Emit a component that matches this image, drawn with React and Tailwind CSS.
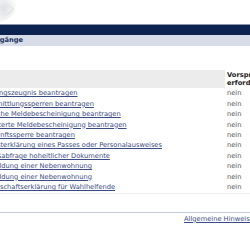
export default function App() {
  const rows = [
    "Führungszeugnis beantragen",
    "Übermittlungssperren beantragen",
    "Einfache Meldebescheinigung beantragen",
    "Erweiterte Meldebescheinigung beantragen",
    "Auskunftssperre beantragen",
    "Verlusterklärung eines Passes oder Personalausweises",
    "Statusabfrage hoheitlicher Dokumente",
    "Anmeldung einer Nebenwohnung",
    "Abmeldung einer Nebenwohnung",
    "Bereitschaftserklärung für Wahlhelfende",
  ];

  return (
    <div className="w-[250px] h-[250px] overflow-hidden bg-white font-['DejaVu_Sans',Verdana,sans-serif] text-[6.7px]">
      {/* Header with logo */}
      <div className="h-[24px] flex items-start">
        <svg width="22" height="23" viewBox="0 0 22 23" className="opacity-60">
          <defs>
            <radialGradient id="g" cx="0.2" cy="0.4" r="0.8">
              <stop offset="0" stopColor="#c9ccd2" />
              <stop offset="1" stopColor="#ffffff" />
            </radialGradient>
          </defs>
          <path d="M0 0 H16 Q20 8 14 14 Q8 20 0 22 Z" fill="url(#g)" />
          <path d="M2 6 Q10 4 13 9 Q10 14 3 15" fill="none" stroke="#d2d5da" strokeWidth="1.5" />
        </svg>
      </div>
      <div className="border-t border-[#8c94a6] h-[11px] bg-[#0c2350]" />
      <div className="h-[11px] bg-[#d6dce8] flex items-center">
        <span className="ml-[-13px] font-bold text-[#1c3061] whitespace-nowrap">Vorgänge</span>
      </div>

      {/* Table */}
      <div className="mt-[24px] ml-[-20px] w-[300px]">
        <div className="flex h-[18px]">
          <div className="w-[245px] bg-[#ececec]" />
          <div className="pl-[2px] pt-[1px] font-bold text-[#222] leading-[8px] whitespace-nowrap">
            Vorsprache
            <br />
            erforderlich
          </div>
        </div>
        {rows.map((r) => (
          <div key={r} className="flex h-[10.44px] items-center">
            <div className="w-[247px] whitespace-nowrap">
              <a href="#" className="text-[#3a4a82] underline">
                {r}
              </a>
            </div>
            <div className="text-[#555]">nein</div>
          </div>
        ))}
        <div className="border-t border-[#eeeeee] mt-[0.5px]" />
      </div>

      <div className="mt-[18px] border-t border-[#c5cad6] pt-[1px] flex">
        <a href="#" className="ml-[184px] text-[#3a4a82] underline whitespace-nowrap">
          Allgemeine Hinweise
        </a>
      </div>
    </div>
  );
}
